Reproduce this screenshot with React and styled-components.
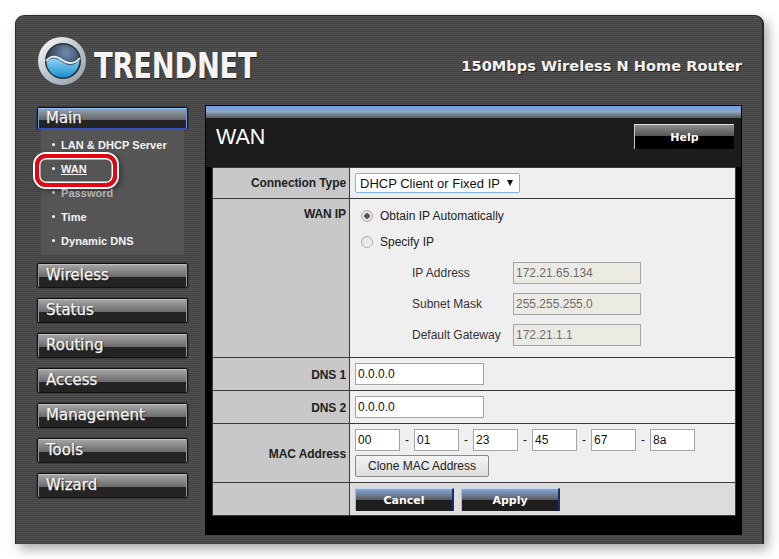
import React from 'react';
import styled, { createGlobalStyle } from 'styled-components';

const GlobalStyle = createGlobalStyle`
  html, body { margin: 0; padding: 0; background: #fff; }
  * { box-sizing: border-box; }
`;

const Page = styled.div`
  width: 779px;
  height: 559px;
  padding: 15px 0 0 15px;
  background: #fff;
  overflow: hidden;
`;

const Frame = styled.div`
  width: 749px;
  height: 529px;
  border-radius: 9px 9px 0 0;
  border: solid #2a2a2a;
  border-width: 1px 2px 0 1px;
  padding: 19px 20px 0 21px;
  background: repeating-linear-gradient(180deg, #4f4f4f 0 1px, #444 1px 2px);
  box-shadow: 4px 5px 12px rgba(0, 0, 0, 0.35);
  display: flex;
  flex-direction: column;
`;

const Banner = styled.header`
  height: 72px;
  display: flex;
  align-items: flex-start;
  justify-content: space-between;
`;

const Brand = styled.div`
  display: flex;
  align-items: center;
  gap: 7px;
  margin-top: 1px;
`;

const BrandName = styled.span`
  display: inline-block;
  font-family: "DejaVu Sans", sans-serif;
  font-weight: bold;
  font-size: 35px;
  line-height: 30px;
  letter-spacing: -0.4px;
  color: #f4f4f4;
  text-shadow: 1px 1px 1px #222;
  transform: scaleX(0.785);
  transform-origin: left center;
  margin-top: 9px;
`;

const Tagline = styled.span`
  font-family: "DejaVu Sans", sans-serif;
  font-weight: bold;
  font-size: 14.6px;
  line-height: 18px;
  color: #f2f2f2;
  text-shadow: 1px 1px 1px #222;
  margin-top: 22px;
`;

const Columns = styled.div`
  display: flex;
  gap: 17px;
`;

const Sidebar = styled.nav`
  width: 151px;
  flex: none;
  display: flex;
  flex-direction: column;
`;

const MenuButton = styled.div`
  height: 25px;
  margin-bottom: 10px;
  padding: 1px 0 0 8px;
  border: 1px solid #111;
  border-radius: 2px;
  outline: 1px solid #3a3a3a;
  box-shadow: inset 0 1px 0 #c0c0c0, inset 1px 0 0 #999, inset -1px 0 0 #999;
  background: linear-gradient(180deg, #a8a8a8 0, #6a6a6a 13px, #242424 13px, #242424 100%);
  font-family: "DejaVu Sans", sans-serif;
  font-size: 15px;
  line-height: 20px;
  color: #f4f4f4;
  -webkit-text-stroke: 0.25px #f4f4f4;
  text-shadow: 1px 1px 1px #222;
`;

const ActiveButton = styled(MenuButton)`
  height: 23px;
  margin: 0;
  padding-top: 0;
  box-shadow: inset 0 1px 0 #8fc0f5, inset 1px 0 0 #6f9fe0, inset -1px 0 0 #6f9fe0;
  border-bottom: 2px solid #3550c0;
  background: linear-gradient(180deg, #98a8b8 0, #666 12px, #242424 12px, #242424 100%);
`;

const SubMenu = styled.ul`
  list-style: none;
  margin: 0 4px 8px;
  padding: 3px 0 2px 11px;
  height: 125px;
  background: #555;
`;

const SubItem = styled.li`
  position: relative;
  height: 24px;
  padding-left: 9px;
  font-family: "Liberation Sans", sans-serif;
  font-weight: bold;
  font-size: 11px;
  letter-spacing: 0.05px;
  line-height: 24px;
  color: ${(p) => (p.$muted ? '#b4b4b4' : '#f4f4f4')};
  text-decoration: ${(p) => (p.$current ? 'underline' : 'none')};
  &::before {
    content: '';
    position: absolute;
    left: 0;
    top: 10px;
    width: 3px;
    height: 3px;
    border-radius: 50%;
    background: ${(p) => (p.$muted ? '#b4b4b4' : '#f4f4f4')};
  }
`;

const Highlight = styled.span`
  position: absolute;
  left: -17px;
  top: -3px;
  width: 82px;
  height: 33px;
  border: 4px solid #e30613;
  border-radius: 11px;
  box-shadow: 0 0 0 2px #fff, inset 0 0 0 1.5px #fff, 2px 2px 5px 2px rgba(0, 0, 0, 0.4);
  pointer-events: none;
`;

const Panel = styled.main`
  width: 538px;
  height: 430px;
  background: #000;
  border: 1px solid #000;
  display: flex;
  flex-direction: column;
  margin-top: -2px;
`;

const Ribbon = styled.div`
  height: 12px;
  background: linear-gradient(180deg, #6d9be8 0, #8fa8c8 45%, #5a5a5a 100%);
  flex: none;
`;

const TitleBar = styled.div`
  height: 49px;
  flex: none;
  background: #1c1c1c;
  display: flex;
  justify-content: space-between;
  padding: 6px 7px 0 10px;
`;

const Title = styled.h1`
  margin: 0;
  font-family: "Liberation Sans", sans-serif;
  font-weight: normal;
  font-size: 21.5px;
  line-height: 26px;
  color: #fff;
`;

const HelpButton = styled.button`
  width: 100px;
  height: 25px;
  border: 0;
  border-top: 1px solid #ddd;
  border-left: 1px solid #ccc;
  padding: 0;
  background: linear-gradient(180deg, #8c8c8c 0, #555 11px, #000 11px);
  font-family: "DejaVu Sans", sans-serif;
  font-weight: bold;
  font-size: 11px;
  color: #fff;
`;

const FormArea = styled.div`
  margin: 0 5px 0 6px;
  border: 1px solid #3a3a3a;
  display: grid;
  grid-template-columns: 136px 1fr;
  background: #3a3a3a;
  row-gap: 1px;
  column-gap: 1px;
`;

const Label = styled.div`
  background: #c8c8c8;
  padding: ${(p) => p.$top ?? 1}px 3px 0 0;
  text-align: right;
  height: ${(p) => p.$h}px;
  display: flex;
  justify-content: flex-end;
  align-items: ${(p) => (p.$top ? 'flex-start' : 'center')};
  font-family: "Liberation Sans", sans-serif;
  font-weight: bold;
  font-size: 12px;
  letter-spacing: -0.1px;
  color: #222;
`;

const Value = styled.div`
  background: ${(p) => (p.$light ? '#dcdcdc' : '#efefef')};
  height: ${(p) => p.$h}px;
  padding: 0 0 0 5px;
  display: flex;
  align-items: center;
  font-family: "Liberation Sans", sans-serif;
  font-size: 12px;
  color: #222;
`;

const SelectWrap = styled.div`
  position: relative;
  width: 165px;
  height: 20px;
  &::after {
    content: '';
    position: absolute;
    right: 7px;
    top: 7px;
    border-left: 3.5px solid transparent;
    border-right: 3.5px solid transparent;
    border-top: 6px solid #111;
    pointer-events: none;
  }
`;

const Select = styled.select`
  appearance: none;
  width: 100%;
  height: 100%;
  padding: 0 0 0 4px;
  border: 1px solid #7eb4ea;
  border-radius: 2px;
  background: #fff;
  font-family: "Liberation Sans", sans-serif;
  font-size: 13px;
  color: #111;
`;

const WanStack = styled.div`
  display: flex;
  flex-direction: column;
  width: 100%;
  height: 100%;
  padding: 4px 0 0 6px;
`;

const RadioRow = styled.label`
  height: 26px;
  display: flex;
  align-items: center;
  gap: 7px;
  color: #222;
`;

const Radio = styled.input`
  appearance: none;
  margin: 0;
  width: 12px;
  height: 12px;
  border-radius: 50%;
  border: 1px solid #b0b0b0;
  background: ${(p) => (p.checked
    ? 'radial-gradient(circle, #555 0 2.5px, #e4e4e4 3px)'
    : 'linear-gradient(135deg, #ddd, #f8f8f8)')};
`;

const AddressGrid = styled.div`
  display: grid;
  grid-template-columns: 101px 128px;
  grid-auto-rows: 31px;
  align-items: center;
  margin-left: 51px;
  padding-top: 2px;
`;

const AddressLabel = styled.span`
  color: #333;
`;

const Field = styled.input`
  width: ${(p) => p.$w}px;
  height: 22px;
  padding: 0 0 0 2px;
  border: 1px solid #a4a4a4;
  background: ${(p) => (p.disabled ? '#ebebe4' : '#fff')};
  font-family: "Liberation Sans", sans-serif;
  font-size: 12px;
  color: ${(p) => (p.disabled ? '#6d6d6d' : '#111')};
  border-radius: 0;
  -webkit-text-fill-color: currentColor;
  opacity: 1;
`;

const MacStack = styled.div`
  display: flex;
  flex-direction: column;
  gap: 4px;
  margin-top: -1px;
`;

const MacRow = styled.div`
  display: flex;
  align-items: center;
`;

const Dash = styled.span`
  width: 14px;
  text-align: center;
`;

const CloneButton = styled.button`
  width: 134px;
  height: 22px;
  padding: 0;
  border: 1px solid #8a8a8a;
  border-radius: 2px;
  background: linear-gradient(180deg, #f4f4f4, #dcdcdc);
  font-family: "Liberation Sans", sans-serif;
  font-size: 12px;
  color: #222;
`;

const ActionRow = styled.div`
  display: flex;
  gap: 7px;
  margin-top: 1px;
`;

const ActionButton = styled.button`
  width: 99px;
  height: 23px;
  padding: 0;
  border: 0;
  border-top: 1px solid #c4dcf8;
  border-left: 1px solid #8fc0f0;
  border-right: 2px solid #1c2a70;
  background: linear-gradient(180deg, #86a8d8 0, #5a5a5a 11px, #1e1e1e 11px);
  font-family: "DejaVu Sans", sans-serif;
  font-weight: bold;
  font-size: 11px;
  color: #fff;
`;

const menu = ['Wireless', 'Status', 'Routing', 'Access', 'Management', 'Tools', 'Wizard'];

function Logo() {
  return (
    <svg width="50" height="50" viewBox="0 0 50 50">
      <defs>
        <linearGradient id="ring" x1="0.15" y1="0.1" x2="0.85" y2="0.95">
          <stop offset="0" stopColor="#f2f2f2" />
          <stop offset="0.5" stopColor="#b8c4cc" />
          <stop offset="1" stopColor="#9aa6ae" />
        </linearGradient>
        <radialGradient id="dome" cx="0.6" cy="0.25" r="0.7">
          <stop offset="0" stopColor="#6f8db0" />
          <stop offset="1" stopColor="#1d2b3c" />
        </radialGradient>
        <linearGradient id="sea" x1="0" y1="0" x2="0" y2="1">
          <stop offset="0" stopColor="#8fd2f0" />
          <stop offset="1" stopColor="#1a8fd0" />
        </linearGradient>
      </defs>
      <circle cx="25" cy="25" r="24" fill="url(#ring)" />
      <circle cx="26" cy="25" r="18" fill="#2c3338" />
      <circle cx="26" cy="25" r="16.5" fill="url(#dome)" />
      <path d="M9.5 26C14 21 20 22 25 26s12 5 17.5-2C42 34 35 41.5 26 41.5S10 35 9.5 26Z" fill="url(#sea)" />
      <path d="M9 25C14 19 20 20 25 24s12 5 18-2" fill="none" stroke="#eef4f8" strokeWidth="1.8" />
    </svg>
  );
}

export default function App() {
  return (
    <Page>
      <GlobalStyle />
      <Frame>
        <Banner>
          <Brand>
            <Logo />
            <BrandName>TRENDNET</BrandName>
          </Brand>
          <Tagline>150Mbps Wireless N Home Router</Tagline>
        </Banner>
        <Columns>
          <Sidebar>
            <ActiveButton>Main</ActiveButton>
            <SubMenu>
              <SubItem>LAN &amp; DHCP Server</SubItem>
              <SubItem $current>
                WAN
                <Highlight />
              </SubItem>
              <SubItem $muted>Password</SubItem>
              <SubItem>Time</SubItem>
              <SubItem>Dynamic DNS</SubItem>
            </SubMenu>
            {menu.map((item) => (
              <MenuButton key={item}>{item}</MenuButton>
            ))}
          </Sidebar>
          <Panel>
            <Ribbon />
            <TitleBar>
              <Title>WAN</Title>
              <HelpButton>Help</HelpButton>
            </TitleBar>
            <FormArea>
              <Label $h={30} $top={0}>Connection Type</Label>
              <Value $h={30}>
                <SelectWrap>
                  <Select defaultValue="dhcp">
                    <option value="dhcp">DHCP Client or Fixed IP</option>
                  </Select>
                </SelectWrap>
              </Value>

              <Label $h={158} $top={8}>WAN IP</Label>
              <Value $h={158}>
                <WanStack>
                  <RadioRow>
                    <Radio type="radio" name="wan" checked readOnly />
                    Obtain IP Automatically
                  </RadioRow>
                  <RadioRow>
                    <Radio type="radio" name="wan" readOnly />
                    Specify IP
                  </RadioRow>
                  <AddressGrid>
                    <AddressLabel>IP Address</AddressLabel>
                    <Field $w={128} disabled value="172.21.65.134" readOnly />
                    <AddressLabel>Subnet Mask</AddressLabel>
                    <Field $w={128} disabled value="255.255.255.0" readOnly />
                    <AddressLabel>Default Gateway</AddressLabel>
                    <Field $w={128} disabled value="172.21.1.1" readOnly />
                  </AddressGrid>
                </WanStack>
              </Value>

              <Label $h={32}>DNS 1</Label>
              <Value $h={32}>
                <Field $w={129} defaultValue="0.0.0.0" />
              </Value>

              <Label $h={32}>DNS 2</Label>
              <Value $h={32}>
                <Field $w={129} defaultValue="0.0.0.0" />
              </Value>

              <Label $h={58}>MAC Address</Label>
              <Value $h={58}>
                <MacStack>
                  <MacRow>
                    <Field $w={45} defaultValue="00" />
                    <Dash>-</Dash>
                    <Field $w={45} defaultValue="01" />
                    <Dash>-</Dash>
                    <Field $w={45} defaultValue="23" />
                    <Dash>-</Dash>
                    <Field $w={45} defaultValue="45" />
                    <Dash>-</Dash>
                    <Field $w={45} defaultValue="67" />
                    <Dash>-</Dash>
                    <Field $w={45} defaultValue="8a" />
                  </MacRow>
                  <CloneButton>Clone MAC Address</CloneButton>
                </MacStack>
              </Value>

              <Label $h={32} />
              <Value $h={32} $light>
                <ActionRow>
                  <ActionButton>Cancel</ActionButton>
                  <ActionButton>Apply</ActionButton>
                </ActionRow>
              </Value>
            </FormArea>
          </Panel>
        </Columns>
      </Frame>
    </Page>
  );
}
